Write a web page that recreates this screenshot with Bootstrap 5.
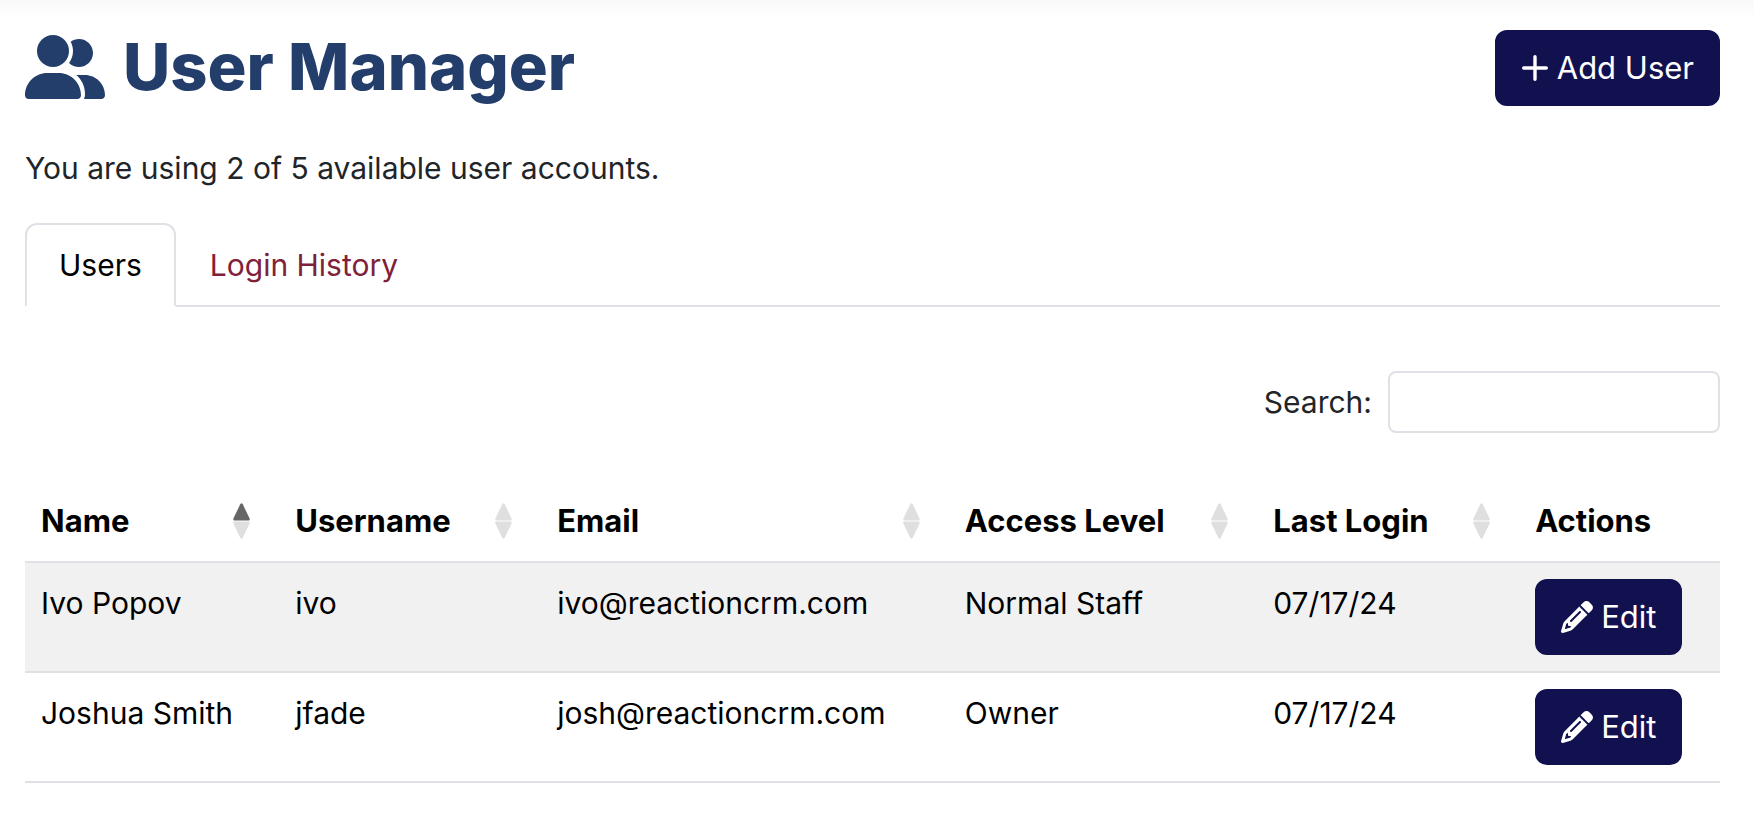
<!DOCTYPE html>
<html lang="en">
<head>
<meta charset="utf-8">
<meta name="viewport" content="width=device-width, initial-scale=1">
<title>User Manager</title>
<link href="https://cdn.jsdelivr.net/npm/bootstrap@5.3.0/dist/css/bootstrap.min.css" rel="stylesheet">
<style>
  body { font-family: Inter, "Liberation Sans", sans-serif; font-size: 30px; line-height: 48px; color: #212529; }
  .page-shell { padding: 30px 34px 40px 25px; background: linear-gradient(#f9f9f9, #fff 18px) no-repeat; }
  .page-title { color: #233e6b; font-size: 65px; line-height: 74px; font-weight: 800; gap: 18px; }
  .page-title svg { width: 80px; height: 64px; }
  .btn-navy { --bs-btn-color: #fff; --bs-btn-bg: #12114f; --bs-btn-border-color: #12114f;
    --bs-btn-hover-color: #fff; --bs-btn-hover-bg: #1d1c68; --bs-btn-hover-border-color: #1d1c68;
    --bs-btn-font-size: 31px; --bs-btn-line-height: 48px; --bs-btn-padding-x: 24px; --bs-btn-padding-y: 12px;
    --bs-btn-border-width: 2px; --bs-btn-border-radius: 12px; }
  .usage-note { margin: 38px 0 31px; }
  .nav-tabs { --bs-nav-tabs-border-width: 2px; --bs-nav-tabs-border-radius: 12px;
    --bs-nav-link-padding-x: 32px; --bs-nav-link-padding-y: 16px; --bs-nav-tabs-link-active-color: #000;
    --bs-nav-link-color: #7f2139; --bs-nav-link-hover-color: #7f2139; }
  .search-row { gap: 16px; margin: 64px 0 48px; }
  .search-row .form-control { width: 332px; height: 62px; border: 2px solid #dee2e6; border-radius: 8px; font-size: 30px; }
  .user-table { --bs-table-striped-bg: #f1f1f1; --bs-table-striped-color: #000; --bs-table-color: #000; color: #000; margin: 0; table-layout: fixed; }
  .user-table > :not(caption) > * > * { padding: 16px; border-bottom-width: 2px; border-color: #dee2e6; }
  .user-table th { white-space: nowrap; font-size: 31px; }
  .user-table .sort-icon { width: 17px; height: 36px; margin-right: 13px; fill: #dfdfdf; }
  .sort-icon .sorted { fill: #666; }
  .c-name { width: 15%; } .c-user { width: 15.45%; } .c-mail { width: 24.05%; }
  .c-level { width: 18.2%; } .c-login { width: 15.45%; }
</style>
</head>
<body>
<svg class="d-none" aria-hidden="true">
  <symbol id="sort" viewBox="0 0 17 36">
    <path d="M7.200 1.300Q8.500-.7 9.800 1.300L16.600 15.600Q17.200 17.300 15.500 17.500H1.500Q-.2 17.300.4 15.600Z"/>
    <path d="M7.200 34.700Q8.500 36.700 9.800 34.700L16.600 20.400Q17.200 18.700 15.500 18.500H1.500Q-.2 18.700.4 20.400Z"/>
  </symbol>
  <symbol id="pencil" viewBox="0 0 512 512">
    <path d="M410.3 231l11.3-11.3-33.9-33.9-62.1-62.1L291.7 89.8l-11.3 11.3-22.6 22.6L58.6 322.9c-10.4 10.4-18 23.3-22.2 37.4L1 480.7c-2.5 8.4-.2 17.5 6.1 23.7s15.3 8.5 23.7 6.1l120.3-35.4c14.1-4.2 27-11.8 37.4-22.2L387.7 253.7 410.3 231zM160 399.4l-9.1 22.7c-4 3.1-8.5 5.4-13.3 6.9L59.4 452l23-78.1c1.4-4.9 3.8-9.4 6.9-13.3l22.7-9.1v32c0 8.800 7.200 16 16 16h32zM362.7 18.700L348.300 33.200 325.700 55.800 314.300 67.100l33.900 33.900 62.100 62.100 33.900 33.900 11.300-11.300 22.600-22.600 14.500-14.500c25-25 25-65.500 0-90.500L453.300 18.700c-25-25-65.500-25-90.500 0zm-47.400 168l-144 144c-6.200 6.200-16.400 6.200-22.600 0s-6.200-16.400 0-22.600l144-144c6.200-6.200 16.400-6.200 22.600 0s6.200 16.400 0 22.600z"/>
  </symbol>
</svg>

<main class="page-shell">
  <header class="d-flex justify-content-between align-items-start">
    <h1 class="page-title d-flex align-items-center mb-0">
      <svg viewBox="0 0 640 512" fill="currentColor" aria-hidden="true"><path d="M96 128a128 128 0 1 1 256 0A128 128 0 1 1 96 128zM0 482.300C0 383.800 79.800 304 178.300 304h91.400C368.200 304 448 383.800 448 482.300c0 16.400-13.300 29.700-29.700 29.700H29.700C13.300 512 0 498.700 0 482.300zM609.300 512H471.400c5.400-9.400 8.600-20.300 8.600-32v-8c0-60.700-27.100-115.200-69.800-151.800c2.400-.1 4.700-.2 7.100-.2h61.400C567.800 320 640 392.200 640 481.300c0 17-13.800 30.700-30.700 30.700zM432 256c-31 0-59-12.600-79.300-32.900C372.400 196.500 384 163.600 384 128c0-26.800-6.600-52.100-18.300-74.300C384.300 40.100 407.200 32 432 32c61.900 0 112 50.100 112 112s-50.100 112-112 112z"/></svg>
      <span>User Manager</span>
    </h1>
    <button type="button" class="btn btn-navy d-flex align-items-center gap-2">
      <svg width="28" height="32" viewBox="0 0 28 32" fill="none" stroke="currentColor" stroke-width="3.4" stroke-linecap="round" aria-hidden="true"><path d="M14 4.700v22.600M2.700 16h22.600"/></svg>
      <span>Add User</span>
    </button>
  </header>

  <p class="usage-note">You are using 2 of 5 available user accounts.</p>

  <ul class="nav nav-tabs">
    <li class="nav-item"><a class="nav-link active" aria-current="page" href="#users">Users</a></li>
    <li class="nav-item"><a class="nav-link" href="#history">Login History</a></li>
  </ul>

  <section id="users">
    <div class="search-row d-flex justify-content-end align-items-center">
      <label for="search">Search:</label>
      <input type="search" id="search" class="form-control">
    </div>

    <table class="table user-table table-striped">
      <thead>
        <tr>
          <th scope="col" class="c-name"><div class="d-flex justify-content-between align-items-center">Name
            <svg class="sort-icon" viewBox="0 0 17 36" aria-hidden="true"><path class="sorted" d="M7.200 1.300Q8.500-.7 9.800 1.300L16.600 15.600Q17.200 17.300 15.500 17.500H1.500Q-.2 17.300.4 15.600Z"/><path d="M7.200 34.700Q8.500 36.700 9.800 34.700L16.600 20.400Q17.200 18.700 15.500 18.500H1.500Q-.2 18.700.4 20.400Z"/></svg></div></th>
          <th scope="col" class="c-user"><div class="d-flex justify-content-between align-items-center">Username <svg class="sort-icon" aria-hidden="true"><use href="#sort"/></svg></div></th>
          <th scope="col" class="c-mail"><div class="d-flex justify-content-between align-items-center">Email <svg class="sort-icon" aria-hidden="true"><use href="#sort"/></svg></div></th>
          <th scope="col" class="c-level"><div class="d-flex justify-content-between align-items-center">Access Level <svg class="sort-icon" aria-hidden="true"><use href="#sort"/></svg></div></th>
          <th scope="col" class="c-login"><div class="d-flex justify-content-between align-items-center">Last Login <svg class="sort-icon" aria-hidden="true"><use href="#sort"/></svg></div></th>
          <th scope="col">Actions</th>
        </tr>
      </thead>
      <tbody>
        <tr>
          <td>Ivo Popov</td><td>ivo</td><td>ivo@reactioncrm.com</td><td>Normal Staff</td><td>07/17/24</td>
          <td><button type="button" class="btn btn-navy d-flex align-items-center gap-2"><svg width="32" height="32" fill="currentColor" aria-hidden="true"><use href="#pencil"/></svg><span>Edit</span></button></td>
        </tr>
        <tr>
          <td>Joshua Smith</td><td>jfade</td><td>josh@reactioncrm.com</td><td>Owner</td><td>07/17/24</td>
          <td><button type="button" class="btn btn-navy d-flex align-items-center gap-2"><svg width="32" height="32" fill="currentColor" aria-hidden="true"><use href="#pencil"/></svg><span>Edit</span></button></td>
        </tr>
      </tbody>
    </table>
  </section>
</main>
<script src="https://cdn.jsdelivr.net/npm/bootstrap@5.3.0/dist/js/bootstrap.bundle.min.js"></script>
</body>
</html>
